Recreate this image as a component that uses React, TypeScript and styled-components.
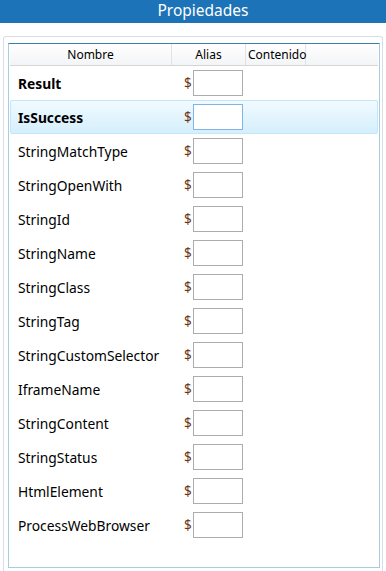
import React from "react";
import styled, { createGlobalStyle } from "styled-components";

const Global = createGlobalStyle`
  html, body { margin: 0; padding: 0; background: #ffffff; }
  body { font-family: "Noto Sans", "Open Sans", sans-serif; }
  * { box-sizing: border-box; }
`;

const Page = styled.div`
  width: 386px;
  height: 571px;
  display: flex;
  flex-direction: column;
  overflow: hidden;
`;

const TitleBar = styled.div`
  height: 23px;
  background: #1c73b7;
  color: #ffffff;
  font-size: 15.5px;
  line-height: 18px;
  padding-top: 1px;
  display: flex;
  justify-content: center;
  align-items: flex-start;
  padding-left: 20px;
`;

const GroupBox = styled.div`
  margin: 13px 3px 0 3px;
  flex: 1;
  border: 1px solid #d5dfe5;
  border-bottom: none;
  border-radius: 3px 3px 0 0;
  padding: 6px 2px 3px 4px;
  display: flex;
`;

const List = styled.div`
  flex: 1;
  border: 1px solid #a7cde3;
  border-top-color: #3c7fb1;
  display: flex;
  flex-direction: column;
  padding: 0 1px;
`;

const HeaderRow = styled.div`
  display: grid;
  grid-template-columns: 162px 74px 60px 1fr;
  height: 22px;
  background: linear-gradient(#ffffff, #f3f4f6);
  border-bottom: 1px solid #d5d5d5;
`;

const HeaderCell = styled.div<{ $align?: string }>`
  font-size: 12px;
  color: #000;
  display: flex;
  align-items: center;
  justify-content: ${(p) => p.$align || "center"};
  border-right: 1px solid #e2e3ea;
  padding: 0 2px;
  &:last-child { border-right: none; }
`;

const Row = styled.div<{ $selected?: boolean }>`
  display: grid;
  grid-template-columns: 162px 74px 1fr;
  height: 34px;
  align-items: center;
  border: 1px solid ${(p) => (p.$selected ? "#c3e6f9" : "transparent")};
  border-radius: 2px;
  background: ${(p) =>
    p.$selected ? "linear-gradient(#f1faff, #d5effc)" : "transparent"};
`;

const Name = styled.div<{ $bold?: boolean }>`
  padding-left: 7px;
  font-size: 13.8px;
  font-weight: ${(p) => (p.$bold ? 700 : 400)};
  color: #000;
  white-space: nowrap;
`;

const AliasCell = styled.div`
  display: flex;
  align-items: center;
  padding-left: 11px;
`;

const Dollar = styled.span`
  font-size: 13.5px;
  color: #6b3512;
  width: 9px;
`;

const Box = styled.div<{ $focused?: boolean }>`
  width: 50px;
  height: 26px;
  background: #fff;
  border: 1px solid ${(p) => (p.$focused ? "#7eb4ea" : "#acacac")};
`;

const rows: { name: string; bold?: boolean; selected?: boolean }[] = [
  { name: "Result", bold: true },
  { name: "IsSuccess", bold: true, selected: true },
  { name: "StringMatchType" },
  { name: "StringOpenWith" },
  { name: "StringId" },
  { name: "StringName" },
  { name: "StringClass" },
  { name: "StringTag" },
  { name: "StringCustomSelector" },
  { name: "IframeName" },
  { name: "StringContent" },
  { name: "StringStatus" },
  { name: "HtmlElement" },
  { name: "ProcessWebBrowser" },
];

export default function App() {
  return (
    <Page>
      <Global />
      <TitleBar>Propiedades</TitleBar>
      <GroupBox>
        <List>
          <HeaderRow>
            <HeaderCell>Nombre</HeaderCell>
            <HeaderCell>Alias</HeaderCell>
            <HeaderCell $align="flex-start">Contenido</HeaderCell>
            <HeaderCell />
          </HeaderRow>
          {rows.map((r) => (
            <Row key={r.name} $selected={r.selected}>
              <Name $bold={r.bold}>{r.name}</Name>
              <AliasCell>
                <Dollar>$</Dollar>
                <Box $focused={r.selected} />
              </AliasCell>
              <div />
            </Row>
          ))}
        </List>
      </GroupBox>
    </Page>
  );
}
